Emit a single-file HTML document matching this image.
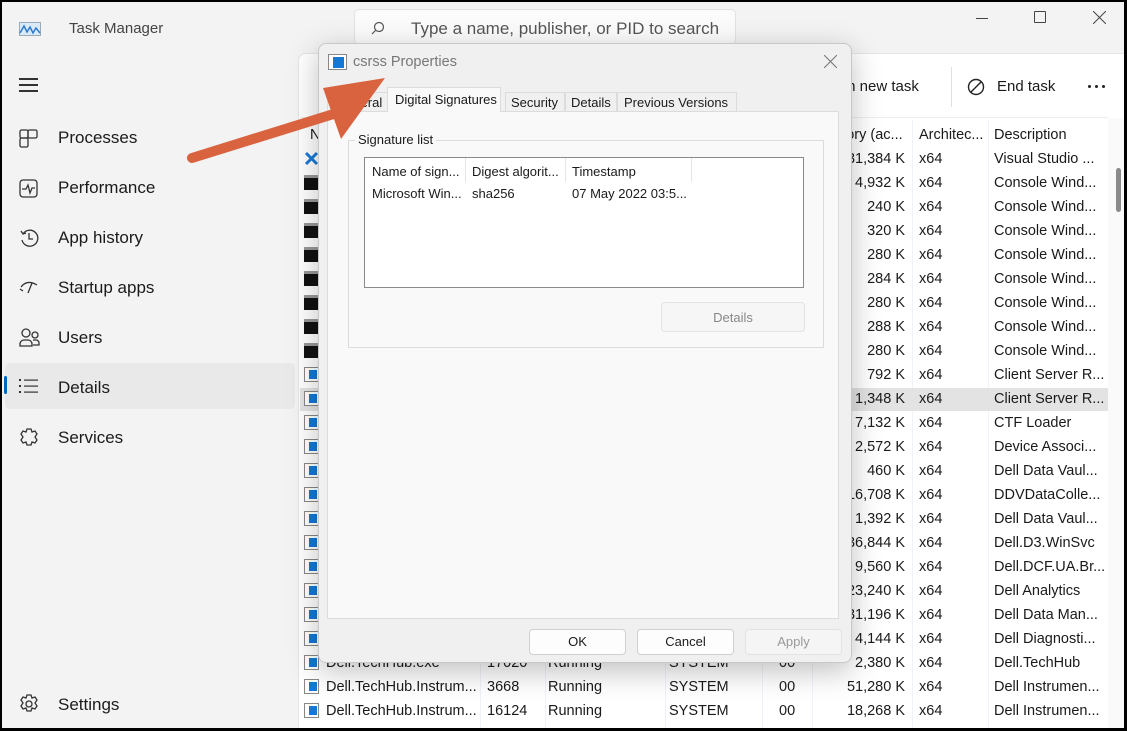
<!DOCTYPE html>
<html><head><meta charset="utf-8"><style>
*{box-sizing:border-box;margin:0;padding:0}
body{width:1127px;height:731px;background:#000;position:relative;overflow:hidden;font-family:"Liberation Sans",sans-serif;color:#1a1a1a}
.win{position:absolute;left:2px;top:2px;width:1122px;height:726px;background:#f3f3f3;overflow:hidden}
.a{position:absolute;white-space:nowrap}
.nav{font-size:17px;color:#1b1b1b}
.panel{position:absolute;left:296px;top:51px;width:830px;height:680px;background:#fff;border-top-left-radius:8px;border:1px solid #e5e5e5}
.t{position:absolute;left:-2px;width:1127px;font-size:14.5px;height:24px;line-height:24px}
.t span{position:absolute;white-space:nowrap}
.ic{position:absolute;left:304px;top:4px;width:15px;height:15px}
.con{background:#111;border-top:3px solid #999}
.wi{background:#fff;border:1px solid #888}
.wi::after{content:"";position:absolute;left:4px;top:2px;width:8px;height:9px;background:#1578d4}
.m{right:222px;text-align:right}
.x{left:919px}.d{left:994px}
.sep{position:absolute;top:118px;width:1px;height:610px;background:#eef3fa}
.dlg{position:absolute;left:318px;top:43px;width:534px;height:620px;background:#f0f0f0;border:1px solid #c8c8c8;border-radius:8px;box-shadow:0 8px 30px rgba(0,0,0,.25);font-size:13px;overflow:hidden}
.btn{position:absolute;top:585px;width:97px;height:26px;border:1px solid #d0d0d0;border-radius:4px;background:#fdfdfd;text-align:center;line-height:24px;font-size:13px}
</style></head><body>
<div class="win">
<svg class="a" style="left:17px;top:20px" width="22" height="14"><rect x="0.5" y="0.5" width="21" height="13" fill="#dbeaf8" stroke="#9ab"/><polyline points="1,11 5,4 8,10 11,5 14,11 17,6 21,11" fill="none" stroke="#2a7ad0" stroke-width="1.5"/></svg>
<div class="a" style="left:67px;top:18px;font-size:15px;color:#444">Task Manager</div>
<div class="a" style="left:352px;top:7px;width:382px;height:36px;background:#fbfbfb;border:1px solid #e2e2e2;border-radius:5px"></div>
<svg class="a" style="left:369px;top:19px" width="14" height="14"><circle cx="8" cy="6" r="4.5" fill="none" stroke="#555" stroke-width="1.2"/><line x1="4.5" y1="9.5" x2="1" y2="13" stroke="#555" stroke-width="1.2"/></svg>
<div class="a" style="left:409px;top:17px;font-size:17px;color:#555">Type a name, publisher, or PID to search</div>
<div class="a" style="left:974px;top:16px;width:12px;height:1px;background:#444"></div>
<div class="a" style="left:1032px;top:9px;width:12px;height:12px;border:1px solid #444;border-radius:1px"></div>
<svg class="a" style="left:1091px;top:9px" width="13" height="13"><path d="M0 0L13 13M13 0L0 13" stroke="#444" stroke-width="1"/></svg>
<div class="a" style="left:17px;top:76px;width:19px;height:1.5px;background:#333;box-shadow:0 6px 0 #333,0 12px 0 #333"></div>
<svg class="a" style="left:17px;top:127px" width="19" height="19" fill="none" stroke="#333" stroke-width="1.3"><rect x="1" y="1" width="8" height="8" rx="1.5"/><rect x="9" y="1" width="9" height="8" rx="1.5"/><rect x="1" y="9" width="8" height="9" rx="1.5"/></svg>
<div class="a nav" style="left:56px;top:126px">Processes</div>
<svg class="a" style="left:17px;top:177px" width="19" height="19" fill="none" stroke="#333" stroke-width="1.3"><rect x="1" y="1" width="17" height="17" rx="3"/><polyline points="3,10 7,10 9,6 11,14 13,9 16,9"/></svg>
<div class="a nav" style="left:56px;top:176px">Performance</div>
<svg class="a" style="left:17px;top:226px" width="20" height="20" fill="none" stroke="#333" stroke-width="1.3"><path d="M4 6A8 8 0 1 1 3 12"/><polyline points="2,3 4,6 7,5"/><polyline points="10,5 10,11 14,11"/></svg>
<div class="a nav" style="left:56px;top:226px">App history</div>
<svg class="a" style="left:17px;top:277px" width="20" height="18" fill="none" stroke="#333" stroke-width="1.3"><path d="M2 8Q8 0 18 6M9 14L13 4M1 10l3 2"/></svg>
<div class="a nav" style="left:56px;top:276px">Startup apps</div>
<svg class="a" style="left:17px;top:326px" width="22" height="20" fill="none" stroke="#333" stroke-width="1.3"><circle cx="7" cy="5" r="4"/><circle cx="16" cy="7" r="3"/><path d="M1 18v-2a4 4 0 0 1 4-4h4a4 4 0 0 1 4 4v2zM14 12h3a3 3 0 0 1 3 3v2h-6"/></svg>
<div class="a nav" style="left:56px;top:326px">Users</div>
<div class="a" style="left:3px;top:361px;width:290px;height:46px;background:#e9e9e9;border-radius:5px"></div>
<div class="a" style="left:2px;top:374px;width:3px;height:18px;background:#0067c0;border-radius:2px"></div>
<svg class="a" style="left:17px;top:377px" width="20" height="14" fill="#333"><rect x="0" y="0" width="2" height="2"/><rect x="0" y="6" width="2" height="2"/><rect x="0" y="12" width="2" height="2"/><rect x="5" y="0.5" width="14" height="1.2"/><rect x="5" y="6.5" width="14" height="1.2"/><rect x="5" y="12.5" width="14" height="1.2"/></svg>
<div class="a nav" style="left:56px;top:376px">Details</div>
<svg class="a" style="left:17px;top:425px" width="20" height="20" fill="none" stroke="#333" stroke-width="1.3"><path d="M8 2h4l1 3 3-1 2 3-2 3 2 3-2 3-3-1-1 3H8l-1-3-3 1-2-3 2-3-2-3 2-3 3 1z"/></svg>
<div class="a nav" style="left:56px;top:426px">Services</div>
<svg class="a" style="left:17px;top:692px" width="20" height="20" fill="none" stroke="#333" stroke-width="1.3"><path d="M8 1h4l1 3 3-1 2 3-2 3 2 3-2 3-3-1-1 3H8l-1-3-3 1-2-3 2-3-2-3 2-3 3 1z"/><circle cx="10" cy="10" r="3"/></svg>
<div class="a nav" style="left:56px;top:693px">Settings</div>

<div class="panel"></div>
<div class="a" style="left:298px;top:115px;width:808px;height:1px;background:#eee"></div>
<div class="a" style="left:949px;top:65px;width:1px;height:40px;background:#e0e0e0"></div>
<div class="a" style="left:826px;top:76px;font-size:15px">Run new task</div>
<svg class="a" style="left:965px;top:76px" width="18" height="18" fill="none" stroke="#222" stroke-width="1.4"><circle cx="9" cy="9" r="7.5"/><line x1="4" y1="14" x2="14" y2="4"/></svg>
<div class="a" style="left:995px;top:76px;font-size:15px">End task</div>
<div class="a" style="left:1086px;top:83px;width:3px;height:3px;background:#222;border-radius:2px;box-shadow:7px 0 0 #222,14px 0 0 #222"></div>
<div class="t" style="top:121px"><span style="left:310px">Name</span><span style="left:814px">Memory (ac...</span><span style="left:919px">Architec...</span><span style="left:994px">Description</span></div>
<div class="sep" style="left:478px"></div><div class="sep" style="left:543px"></div><div class="sep" style="left:663px"></div><div class="sep" style="left:760px"></div><div class="sep" style="left:810px"></div><div class="sep" style="left:910px"></div><div class="sep" style="left:986px"></div>
<div class="a" style="left:1106px;top:116px;width:16px;height:610px;background:#fafafa"></div>
<div class="a" style="left:1114px;top:166px;width:5px;height:44px;background:#8a8a8a;border-radius:3px"></div>
<div class="a" style="left:298px;top:386px;width:808px;height:23px;background:#e3e3e3"></div>
<div class="t" style="top:145px"><svg class="ic" viewBox="0 0 15 15"><path d="M2 2L13 13M13 2L2 13" stroke="#1a7ad8" stroke-width="3"/></svg><span class="m">31,384 K</span><span class="x">x64</span><span class="d">Visual Studio ...</span></div>
<div class="t" style="top:169px"><i class="ic con"></i><span class="m">4,932 K</span><span class="x">x64</span><span class="d">Console Wind...</span></div>
<div class="t" style="top:193px"><i class="ic con"></i><span class="m">240 K</span><span class="x">x64</span><span class="d">Console Wind...</span></div>
<div class="t" style="top:217px"><i class="ic con"></i><span class="m">320 K</span><span class="x">x64</span><span class="d">Console Wind...</span></div>
<div class="t" style="top:241px"><i class="ic con"></i><span class="m">280 K</span><span class="x">x64</span><span class="d">Console Wind...</span></div>
<div class="t" style="top:265px"><i class="ic con"></i><span class="m">284 K</span><span class="x">x64</span><span class="d">Console Wind...</span></div>
<div class="t" style="top:289px"><i class="ic con"></i><span class="m">280 K</span><span class="x">x64</span><span class="d">Console Wind...</span></div>
<div class="t" style="top:313px"><i class="ic con"></i><span class="m">288 K</span><span class="x">x64</span><span class="d">Console Wind...</span></div>
<div class="t" style="top:337px"><i class="ic con"></i><span class="m">280 K</span><span class="x">x64</span><span class="d">Console Wind...</span></div>
<div class="t" style="top:361px"><i class="ic wi"></i><span class="m">792 K</span><span class="x">x64</span><span class="d">Client Server R...</span></div>
<div class="t" style="top:385px"><i class="ic wi"></i><span class="m">1,348 K</span><span class="x">x64</span><span class="d">Client Server R...</span></div>
<div class="t" style="top:409px"><i class="ic wi"></i><span class="m">7,132 K</span><span class="x">x64</span><span class="d">CTF Loader</span></div>
<div class="t" style="top:433px"><i class="ic wi"></i><span class="m">2,572 K</span><span class="x">x64</span><span class="d">Device Associ...</span></div>
<div class="t" style="top:457px"><i class="ic wi"></i><span class="m">460 K</span><span class="x">x64</span><span class="d">Dell Data Vaul...</span></div>
<div class="t" style="top:481px"><i class="ic wi"></i><span class="m">16,708 K</span><span class="x">x64</span><span class="d">DDVDataColle...</span></div>
<div class="t" style="top:505px"><i class="ic wi"></i><span class="m">1,392 K</span><span class="x">x64</span><span class="d">Dell Data Vaul...</span></div>
<div class="t" style="top:529px"><i class="ic wi"></i><span class="m">36,844 K</span><span class="x">x64</span><span class="d">Dell.D3.WinSvc</span></div>
<div class="t" style="top:553px"><i class="ic wi"></i><span class="m">9,560 K</span><span class="x">x64</span><span class="d">Dell.DCF.UA.Br...</span></div>
<div class="t" style="top:577px"><i class="ic wi"></i><span class="m">23,240 K</span><span class="x">x64</span><span class="d">Dell Analytics</span></div>
<div class="t" style="top:601px"><i class="ic wi"></i><span class="m">31,196 K</span><span class="x">x64</span><span class="d">Dell Data Man...</span></div>
<div class="t" style="top:625px"><i class="ic wi"></i><span class="m">4,144 K</span><span class="x">x64</span><span class="d">Dell Diagnosti...</span></div>
<div class="t" style="top:649px"><i class="ic wi"></i><span style="left:326px">Dell.TechHub.exe</span><span style="left:487px">17020</span><span style="left:548px">Running</span><span style="left:669px">SYSTEM</span><span style="left:779px">00</span><span class="m">2,380 K</span><span class="x">x64</span><span class="d">Dell.TechHub</span></div>
<div class="t" style="top:673px"><i class="ic wi"></i><span style="left:326px">Dell.TechHub.Instrum...</span><span style="left:487px">3668</span><span style="left:548px">Running</span><span style="left:669px">SYSTEM</span><span style="left:779px">00</span><span class="m">51,280 K</span><span class="x">x64</span><span class="d">Dell Instrumen...</span></div>
<div class="t" style="top:697px"><i class="ic wi"></i><span style="left:326px">Dell.TechHub.Instrum...</span><span style="left:487px">16124</span><span style="left:548px">Running</span><span style="left:669px">SYSTEM</span><span style="left:779px">00</span><span class="m">18,268 K</span><span class="x">x64</span><span class="d">Dell Instrumen...</span></div>
</div>
<div class="dlg">
<div class="a" style="left:9px;top:10px;width:19px;height:16px;border:1px solid #888;background:#fff"></div>
<div class="a" style="left:14px;top:13px;width:11px;height:11px;background:#1578d4"></div>
<div class="a" style="left:34px;top:10px;font-size:14.5px;color:#777">csrss Properties</div>
<svg class="a" style="left:505px;top:11px" width="13" height="13"><path d="M0 0L13 13M13 0L0 13" stroke="#777" stroke-width="1.1"/></svg>
<div class="a" style="left:8px;top:67px;width:512px;height:508px;background:#f9f9f9;border:1px solid #dcdcdc"></div>
<div class="a" style="left:8px;top:48px;width:61px;height:20px;border:1px solid #dcdcdc;background:#f0f0f0;padding:2px 0 0 8px">General</div>
<div class="a" style="left:68px;top:43px;width:114px;height:25px;border:1px solid #dcdcdc;border-bottom:none;background:#f9f9f9;padding:4px 0 0 7px">Digital Signatures</div>
<div class="a" style="left:186px;top:48px;width:60px;height:20px;border:1px solid #dcdcdc;padding:2px 0 0 5px">Security</div>
<div class="a" style="left:246px;top:48px;width:52px;height:20px;border:1px solid #dcdcdc;padding:2px 0 0 5px">Details</div>
<div class="a" style="left:298px;top:48px;width:120px;height:20px;border:1px solid #dcdcdc;padding:2px 0 0 6px">Previous Versions</div>
<div class="a" style="left:29px;top:96px;width:476px;height:208px;border:1px solid #dcdcdc"></div>
<div class="a" style="left:36px;top:88px;background:#f9f9f9;padding:0 3px">Signature list</div>
<div class="a" style="left:45px;top:113px;width:440px;height:131px;border:1px solid #8a8a8a;background:#fff"></div>
<div class="a" style="left:53px;top:120px">Name of sign...</div>
<div class="a" style="left:146px;top:114px;width:1px;height:24px;background:#e5e5e5"></div>
<div class="a" style="left:153px;top:120px">Digest algorit...</div>
<div class="a" style="left:246px;top:114px;width:1px;height:24px;background:#e5e5e5"></div>
<div class="a" style="left:253px;top:120px">Timestamp</div>
<div class="a" style="left:372px;top:114px;width:1px;height:24px;background:#e5e5e5"></div>
<div class="a" style="left:53px;top:142px">Microsoft Win...</div>
<div class="a" style="left:153px;top:142px">sha256</div>
<div class="a" style="left:253px;top:142px">07 May 2022 03:5...</div>
<div class="a" style="left:342px;top:258px;width:144px;height:30px;border:1px solid #e3e3e3;border-radius:4px;background:#f6f6f6;color:#888;text-align:center;line-height:30px">Details</div>
<div class="btn" style="left:210px">OK</div>
<div class="btn" style="left:318px">Cancel</div>
<div class="btn" style="left:426px;color:#999;background:#f5f5f5;border-color:#e3e3e3">Apply</div>
</div>
<svg class="a" style="left:0;top:0" width="1127" height="731"><line x1="192" y1="158" x2="340" y2="112" stroke="#d9633f" stroke-width="10" stroke-linecap="round"/><polygon points="385,78 323,88 341,139" fill="#d9633f"/></svg>
</body></html>
